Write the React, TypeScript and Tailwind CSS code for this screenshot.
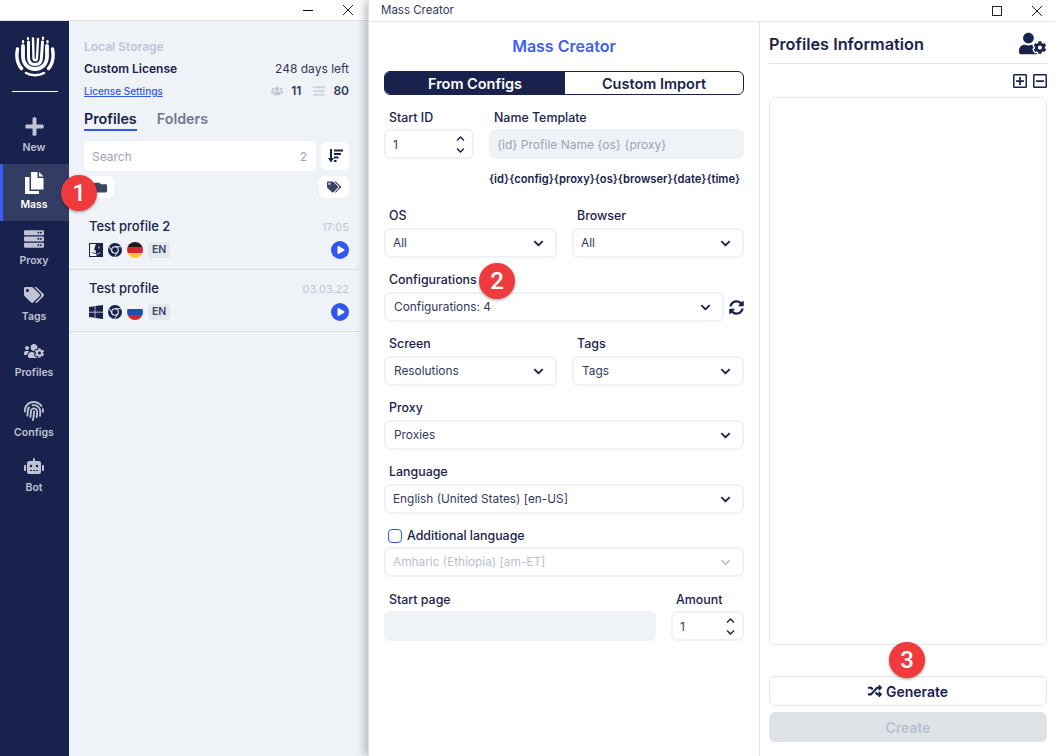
import React from "react";
import {
  FaPlus, FaServer, FaTags, FaUsersCog, FaFingerprint, FaRobot, FaWindows, FaSyncAlt,
  FaUserCog, FaRandom, FaFolder, FaPlay, FaRegPlusSquare, FaRegMinusSquare, FaChevronDown, FaChevronUp,
  FaUsers, FaSlidersH,
} from "react-icons/fa";

const FONT = "font-['Inter','Liberation_Sans',sans-serif]";

function NavItem({ icon, label, active, h }: { icon: React.ReactNode; label: string; active?: boolean; h: string }) {
  return (
    <div className={`${h} flex flex-col items-center justify-center gap-[5px] border-l-[3px] pr-[4px] ${active ? "border-[#3a5cf0] bg-[#333c62] text-white" : "border-transparent text-[#bfc3d3]"}`}>
      <div className="h-[20px] flex items-center">{icon}</div>
      <div className="text-[10.5px] leading-[13px] font-semibold">{label}</div>
    </div>
  );
}

function Logo() {
  return (
    <svg width="40" height="42" viewBox="0 0 40 42" fill="none" stroke="#fff" strokeLinecap="round">
      <path d="M2.5 13 C1 21 2.5 28 6.5 32.5" strokeWidth="3.4" />
      <path d="M37.5 13 C39 21 37.5 28 33.5 32.5" strokeWidth="3.4" />
      <path d="M8 10 V20 C8 29 14 33 20 33 C26 33 32 29 32 20 V10" strokeWidth="3.8" />
      <path d="M11 37 C16 40 24 40 29 37" strokeWidth="2.6" />
      <path d="M13.5 6 V21 C13.5 26 16 28.5 20 28.5 C24 28.5 26.5 26 26.5 21 L27.5 6" strokeWidth="3" />
      <path d="M18 2.5 L18.5 22 C18.5 25 22 25 22 22 L23 3" strokeWidth="2.4" />
      <path d="M13 2 L13 3 M28 1.5 L28 3 M32.5 5 L32.5 6.5 M8 5 L8 6.5" strokeWidth="2.2" />
    </svg>
  );
}

function MassIcon() {
  return (
    <svg width="19" height="22" viewBox="0 0 19 22" fill="currentColor">
      <path d="M6 0 H12.5 V6 H18.5 V17.5 H6 Z" />
      <path d="M14 0 L18.5 4.5 H14 Z" />
      <path d="M0 5 H4.5 V19 H14 V22 H0 Z" />
    </svg>
  );
}

function FinderIcon() {
  return (
    <svg width="14" height="14" viewBox="0 0 14 14" className="shrink-0">
      <rect width="14" height="14" fill="#19224c" />
      <path d="M1 1 H7 C6 3 5.5 5 5.2 7.2 H6.8 C6.7 8.5 6.8 9.5 7 10 C5.5 10 4 9.6 3 9 L2.6 9.6 C3.8 10.4 5.5 10.9 7.2 10.9 L7.6 13 H1 Z" fill="#f0f2f7" />
      <rect x="9.5" y="3.5" width="1" height="2" fill="#f0f2f7" />
      <path d="M8 11 C9 10.9 10.2 10.4 11.2 9.6" stroke="#f0f2f7" strokeWidth="0.8" fill="none" />
    </svg>
  );
}

function ChromeIcon() {
  return (
    <svg width="14" height="14" viewBox="0 0 14 14" className="shrink-0">
      <circle cx="7" cy="7" r="7" fill="#19224c" />
      <circle cx="7" cy="7" r="3.3" fill="none" stroke="#eff2f7" strokeWidth="1.1" />
      <path d="M7 3.7 H13 M4.2 8.7 L1.2 3.6 M9.8 8.7 L6.8 13.8" stroke="#eff2f7" strokeWidth="0.9" fill="none" />
    </svg>
  );
}

function Flag({ colors }: { colors: string[] }) {
  return (
    <div className="w-[16px] h-[16px] rounded-full overflow-hidden flex flex-col shrink-0">
      {colors.map((c, i) => (
        <div key={i} className="flex-1" style={{ background: c }} />
      ))}
    </div>
  );
}

function ProfileRow({ name, date, os, flag }: { name: string; date: string; os: React.ReactNode; flag: string[] }) {
  return (
    <div className="h-[62px] border-b border-[#d8dce3] pl-[20px] pr-[10px] pt-[9px] mr-[9px]">
      <div className="flex justify-between items-center h-[20px]">
        <span className="text-[13px] font-medium text-[#19224c]">{name}</span>
        <span className="text-[11px] text-[#c1c7d3]">{date}</span>
      </div>
      <div className="flex justify-between items-center mt-[4px]">
        <div className="flex items-center gap-[5px]">
          {os}
          <ChromeIcon />
          <Flag colors={flag} />
          <span className="bg-[#e4e7ec] rounded-[3px] text-[10.5px] font-semibold text-[#3c4566] px-[4px] h-[16px] leading-[16px]">EN</span>
        </div>
        <div className="w-[18px] h-[18px] rounded-full bg-[#3158ee] flex items-center justify-center">
          <FaPlay className="text-white text-[8px] ml-[1px]" />
        </div>
      </div>
    </div>
  );
}

function Label({ children, mb = "mb-[4px]" }: { children: React.ReactNode; mb?: string }) {
  return <div className={`text-[12.4px] leading-[16px] font-medium text-[#19224c] pl-[5px] ${mb}`}>{children}</div>;
}

function Select({ value, disabled, className = "" }: { value: string; disabled?: boolean; className?: string }) {
  return (
    <div className={`h-[30px] border-2 border-[#eff2f7] rounded-[6px] bg-white pl-[7px] pr-[11px] flex items-center justify-between ${className}`}>
      <span className={`text-[11.85px] ${disabled ? "pt-[2px] text-[#b9bfcd]" : "pt-[1px] text-[#33395c]"}`}>{value}</span>
      <FaChevronDown className={`text-[11px] ${disabled ? "text-[#bcc2d0]" : "text-[#19224c]"}`} />
    </div>
  );
}

function Spinner({ value }: { value: string }) {
  return (
    <div className="h-[30px] border-2 border-[#eff2f7] rounded-[6px] bg-white pl-[7px] pr-[7px] flex items-center justify-between">
      <span className="text-[12px] text-[#33395c] pt-[1px]">{value}</span>
      <div className="flex flex-col gap-[3px] text-[#19224c]">
        <FaChevronUp className="text-[9px]" />
        <FaChevronDown className="text-[9px]" />
      </div>
    </div>
  );
}

function Badge({ n, className }: { n: string; className: string }) {
  return (
    <div className={`absolute w-[36px] h-[36px] rounded-full bg-[#ef3b3d] text-white text-[24px] leading-[36px] text-center font-medium shadow-[0_1px_3px_rgba(0,0,0,0.4)] font-['Roboto',sans-serif] ${className}`}>
      {n}
    </div>
  );
}

function CloseGlyph() {
  return (
    <svg width="10" height="10" viewBox="0 0 10 10" stroke="#222" fill="none"><path d="M0 0L10 10M10 0L0 10" /></svg>
  );
}

export default function App() {
  return (
    <div className={`relative w-[1055px] h-[756px] overflow-hidden flex bg-white ${FONT}`}>
      {/* Left application window */}
      <div className="w-[368px] h-full flex flex-col shrink-0">
        <div className="h-[21px] border-b border-[#e1e4ea] bg-white flex justify-end items-center shrink-0">
          <div className="w-[10px] h-[1px] bg-black mr-[30px]" />
          <div className="mr-[15px]"><CloseGlyph /></div>
        </div>
        <div className="flex-1 flex min-h-0">
          <aside className="w-[69px] bg-[#19224c] shrink-0 flex flex-col">
            <div className="h-[71px] flex flex-col items-center pt-[15px]">
              <Logo />
              <div className="w-[46px] h-[1px] bg-white mt-[13px]" />
            </div>
            <div className="flex flex-col pt-[14px]">
              <NavItem h="h-[58px]" icon={<FaPlus className="text-[21px]" />} label="New" />
              <NavItem h="h-[57px] pb-[2px]" active icon={<MassIcon />} label="Mass" />
              <NavItem h="h-[56px] pb-[2px]" icon={<FaServer className="text-[20px]" />} label="Proxy" />
              <NavItem h="h-[56px] pb-[2px]" icon={<FaTags className="text-[20px]" />} label="Tags" />
              <NavItem h="h-[56px] pb-[2px]" icon={<FaUsersCog className="text-[20px]" />} label="Profiles" />
              <NavItem h="h-[60px] mt-[2px] pb-[2px]" icon={<FaFingerprint className="text-[20px]" />} label="Configs" />
              <NavItem h="h-[49px] pb-[2px]" icon={<FaRobot className="text-[20px]" />} label="Bot" />
            </div>
          </aside>
          <main className="flex-1 bg-[#eff2f7] flex flex-col min-w-0">
            <div className="pl-[15px] pr-[19px] pt-[19px]">
              <div className="text-[12px] leading-[14px] font-semibold text-[#bcc6d6]">Local Storage</div>
              <div className="flex justify-between items-center mt-[8px] h-[14px]">
                <span className="text-[12px] font-semibold text-[#19224c]">Custom License</span>
                <span className="text-[12px] text-[#33395c]">248 days left</span>
              </div>
              <div className="flex justify-between items-center mt-[8px] h-[14px]">
                <span className="text-[10px] font-medium text-[#3158ee] underline">License Settings</span>
                <div className="flex items-center">
                  <FaUsers className="text-[#bcc6d6] text-[12px]" />
                  <span className="text-[12px] font-semibold text-[#33395c] ml-[8px]">11</span>
                  <FaSlidersH className="text-[#ccd2dc] text-[12px] ml-[12px]" />
                  <span className="text-[12px] font-semibold text-[#33395c] ml-[8px]">80</span>
                </div>
              </div>
              <div className="flex gap-[20px] mt-[11px] h-[22px]">
                <span className="text-[14.3px] leading-[20px] font-semibold text-[#19224c] border-b-2 border-[#3158ee] h-[22px]">Profiles</span>
                <span className="text-[14.3px] leading-[20px] font-semibold text-[#6f7a90]">Folders</span>
              </div>
            </div>
            <div className="pl-[15px] pr-[19px] mt-[10px] flex gap-[5px] items-center">
              <div className="flex-1 h-[30px] bg-white rounded-[6px] flex items-center justify-between pl-[8px] pr-[9px] pt-[2px]">
                <span className="text-[12px] text-[#9da3b4]">Search</span>
                <span className="text-[12px] text-[#9da3b4]">2</span>
              </div>
              <div className="w-[28px] h-[28px] bg-white rounded-[6px] flex items-center justify-center">
                <svg width="15" height="14" viewBox="0 0 15 14" fill="#19224c">
                  <path d="M2 0h2v9h2L3 13.5 0 9h2z" />
                  <rect x="6" y="0.5" width="9" height="2" />
                  <rect x="6" y="4" width="7" height="2" />
                  <rect x="6" y="7.5" width="4.5" height="2" />
                  <rect x="6" y="11" width="2.5" height="2" />
                </svg>
              </div>
            </div>
            <div className="pl-[15px] pr-[19px] mt-[5px] flex justify-between items-center h-[22px]">
              <div className="w-[30px] h-[22px] bg-white rounded-[6px] flex items-center justify-center">
                <FaFolder className="text-[#3c4566] text-[13px] ml-[2px]" />
              </div>
              <div className="w-[30px] h-[22px] bg-white rounded-[6px] flex items-center justify-center">
                <FaTags className="text-[#3c4566] text-[14px]" />
              </div>
            </div>
            <div className="mt-[10px]">
              <ProfileRow name="Test profile 2" date="17:05" os={<FinderIcon />} flag={["#1b1b1b", "#d9262c", "#fcc92f"]} />
              <ProfileRow name="Test profile" date="03.03.22" os={<FaWindows className="text-[#19224c] text-[16px] -mx-[1px]" />} flag={["#f2f3f5", "#1d4fb0", "#d8232f"]} />
            </div>
          </main>
        </div>
      </div>

      {/* Mass Creator window */}
      <div className="flex-1 h-full flex flex-col border-l border-[#dfe2e8] shadow-[-4px_0_8px_rgba(60,70,90,0.3)] bg-white min-w-0 z-10">
        <div className="h-[22px] border-b border-[#e3e5ea] flex items-center justify-between shrink-0">
          <span className="text-[11.5px] text-[#33395c] pl-[12px]">Mass Creator</span>
          <div className="flex items-center pt-[1px]">
            <div className="w-[10px] h-[10px] border border-[#222] mr-[30px]" />
            <div className="mr-[13px]"><CloseGlyph /></div>
          </div>
        </div>
        <div className="flex-1 flex min-h-0">
          <section className="w-[391px] border-r border-[#e3e5ea] px-[15px] shrink-0">
            <div className="text-center text-[16px] leading-[20px] font-semibold text-[#3f62ee] mt-[14px]">Mass Creator</div>
            <div className="flex h-[24px] mt-[15px] border border-[#19224c] rounded-[6px] overflow-hidden text-[14.5px] font-semibold">
              <div className="w-[180px] bg-[#19224c] text-white flex items-center justify-center pt-[1px]">From Configs</div>
              <div className="flex-1 text-[#19224c] flex items-center justify-center pt-[1px]">Custom Import</div>
            </div>
            <div className="flex gap-[15px] mt-[15px]">
              <div className="w-[90px]">
                <Label mb="mb-[3px]">Start ID</Label>
                <Spinner value="1" />
              </div>
              <div className="flex-1">
                <Label mb="mb-[3px]">Name Template</Label>
                <div className="h-[30px] rounded-[6px] bg-[#eff2f7] flex items-center pl-[8px] pt-[1px] text-[12px] text-[#9da3b4]">{"{id} Profile Name {os} {proxy}"}</div>
              </div>
            </div>
            <div className="text-[11.2px] leading-[14px] font-semibold text-[#19224c] text-right pr-[4px] mt-[13px] whitespace-nowrap">{"{id}{config}{proxy}{os}{browser}{date}{time}"}</div>
            <div className="flex gap-[15px] mt-[22px]">
              <div className="flex-1"><Label>OS</Label><Select value="All" /></div>
              <div className="w-[172px]"><Label>Browser</Label><Select value="All" /></div>
            </div>
            <div className="mt-[14px]">
              <Label>Configurations</Label>
              <div className="flex items-center gap-[5px]">
                <Select value="Configurations: 4" className="flex-1 pl-[8px]" />
                <FaSyncAlt className="text-[15px] text-[#19224c]" />
              </div>
            </div>
            <div className="flex gap-[15px] mt-[14px]">
              <div className="flex-1"><Label>Screen</Label><Select value="Resolutions" className="pl-[8px]" /></div>
              <div className="w-[172px]"><Label>Tags</Label><Select value="Tags" className="pl-[8px]" /></div>
            </div>
            <div className="mt-[14px]"><Label>Proxy</Label><Select value="Proxies" className="pl-[8px]" /></div>
            <div className="mt-[14px]"><Label>Language</Label><Select value="English (United States) [en-US]" /></div>
            <div className="mt-[14px] flex items-center h-[16px] mb-[3px]">
              <div className="w-[14px] h-[14px] rounded-[4px] border border-[#3158ee] ml-[4px] mr-[5px]" />
              <span className="text-[12.4px] font-medium text-[#19224c]">Additional language</span>
            </div>
            <Select value="Amharic (Ethiopia) [am-ET]" disabled />
            <div className="flex gap-[15px] mt-[15px]">
              <div className="flex-1">
                <Label mb="mb-[3px]">Start page</Label>
                <div className="h-[30px] rounded-[6px] bg-[#eff2f7]" />
              </div>
              <div className="w-[73px]">
                <Label mb="mb-[3px]">Amount</Label>
                <Spinner value="1" />
              </div>
            </div>
          </section>
          <section className="flex-1 flex flex-col pl-[9px] pr-[8px] pb-[14px] min-w-0">
            <div className="h-[42px] flex items-center justify-between border-b border-[#e3e5ea] shrink-0">
              <span className="text-[16.3px] font-semibold text-[#19224c] pt-[3px]">Profiles Information</span>
              <FaUserCog className="text-[#19224c] text-[27px] mr-[1px] mt-[1px]" />
            </div>
            <div className="h-[33px] flex items-center justify-end gap-[4px] text-[#19224c] mr-[-1px] shrink-0">
              <FaRegPlusSquare className="text-[16px]" />
              <FaRegMinusSquare className="text-[16px]" />
            </div>
            <div className="flex-1 border border-[#e3e5ea] rounded-[6px]" />
            <div className="h-[31px] shrink-0" />
            <div className="h-[30px] border border-[#e3e5ea] rounded-[6px] flex items-center justify-center gap-[4px] shrink-0">
              <FaRandom className="text-[14px] text-[#19224c]" />
              <span className="text-[14px] font-semibold text-[#19224c] pt-[1px]">Generate</span>
            </div>
            <div className="h-[30px] mt-[6px] rounded-[6px] bg-[#dfe3e8] flex items-center justify-center text-[14px] font-semibold text-[#b7c1d1] pt-[1px] shrink-0">Create</div>
          </section>
        </div>
      </div>

      <Badge n="1" className="left-[61px] top-[175px] z-20" />
      <Badge n="2" className="left-[479px] top-[263px] z-20" />
      <Badge n="3" className="left-[889px] top-[642px] z-20" />
    </div>
  );
}
